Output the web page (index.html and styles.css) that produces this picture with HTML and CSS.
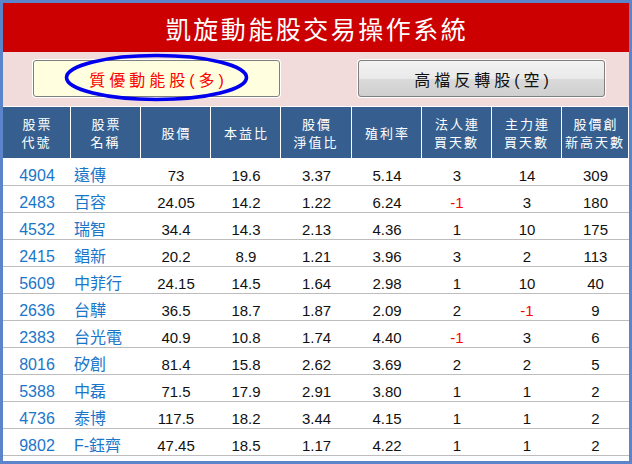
FILE: index.html
```html
<!DOCTYPE html>
<html lang="zh-Hant">
<head>
<meta charset="utf-8">
<title>凱旋動能股交易操作系統</title>
<link rel="stylesheet" href="styles.css">
</head>
<body>
<div class="frame">
  <header class="title">凱旋動能股交易操作系統</header>
  <div class="toolbar">
    <div class="btn btn-long">質優動能股(多)</div>
    <div class="btn btn-short">高檔反轉股(空)</div>
    <svg class="ring" width="186" height="50" viewBox="0 0 186 50"><ellipse cx="92.5" cy="24.5" rx="90" ry="22" fill="none" stroke="#0000ee" stroke-width="3.6"/></svg>
  </div>
  <table class="grid">
    <colgroup>
      <col class="c1"><col class="c2"><col class="c3"><col class="c4"><col class="c5"><col class="c6"><col class="c7"><col class="c8"><col class="c9">
    </colgroup>
    <thead>
      <tr>
        <th>股票<br>代號</th>
        <th>股票<br>名稱</th>
        <th>股價</th>
        <th>本益比</th>
        <th>股價<br>淨值比</th>
        <th>殖利率</th>
        <th>法人連<br>買天數</th>
        <th>主力連<br>買天數</th>
        <th class="last">股價創<br>新高天數</th>
      </tr>
    </thead>
    <tbody>
      <tr><td class="code">4904</td><td class="name">遠傳</td><td>73</td><td>19.6</td><td>3.37</td><td>5.14</td><td>3</td><td>14</td><td>309</td></tr>
      <tr><td class="code">2483</td><td class="name">百容</td><td>24.05</td><td>14.2</td><td>1.22</td><td>6.24</td><td class="neg">-1</td><td>3</td><td>180</td></tr>
      <tr><td class="code">4532</td><td class="name">瑞智</td><td>34.4</td><td>14.3</td><td>2.13</td><td>4.36</td><td>1</td><td>10</td><td>175</td></tr>
      <tr><td class="code">2415</td><td class="name">錩新</td><td>20.2</td><td>8.9</td><td>1.21</td><td>3.96</td><td>3</td><td>2</td><td>113</td></tr>
      <tr><td class="code">5609</td><td class="name">中菲行</td><td>24.15</td><td>14.5</td><td>1.64</td><td>2.98</td><td>1</td><td>10</td><td>40</td></tr>
      <tr><td class="code">2636</td><td class="name">台驊</td><td>36.5</td><td>18.7</td><td>1.87</td><td>2.09</td><td>2</td><td class="neg">-1</td><td>9</td></tr>
      <tr><td class="code">2383</td><td class="name">台光電</td><td>40.9</td><td>10.8</td><td>1.74</td><td>4.40</td><td class="neg">-1</td><td>3</td><td>6</td></tr>
      <tr><td class="code">8016</td><td class="name">矽創</td><td>81.4</td><td>15.8</td><td>2.62</td><td>3.69</td><td>2</td><td>2</td><td>5</td></tr>
      <tr><td class="code">5388</td><td class="name">中磊</td><td>71.5</td><td>17.9</td><td>2.91</td><td>3.80</td><td>1</td><td>1</td><td>2</td></tr>
      <tr><td class="code">4736</td><td class="name">泰博</td><td>117.5</td><td>18.2</td><td>3.44</td><td>4.15</td><td>1</td><td>1</td><td>2</td></tr>
      <tr><td class="code">9802</td><td class="name">F-鈺齊</td><td>47.45</td><td>18.5</td><td>1.17</td><td>4.22</td><td>1</td><td>1</td><td>2</td></tr>
    </tbody>
  </table>
</div>
</body>
</html>
```

FILE: styles.css
```css
html, body {
  margin: 0;
  padding: 0;
  background: #ffffff;
}

.frame {
  width: 632px;
  height: 464px;
  box-sizing: border-box;
  border: 3px solid #5b84cb;
  background: #ffffff;
  font-family: "Liberation Sans", "Noto Sans CJK TC", sans-serif;
  overflow: hidden;
}

.title {
  height: 49px;
  background: #cc0000;
  color: #ffffff;
  font-family: "Noto Sans CJK TC", sans-serif;
  font-size: 25px;
  letter-spacing: 2.5px;
  display: flex;
  align-items: center;
  justify-content: center;
  padding-left: 2px;
}

.toolbar {
  position: relative;
  height: 54px;
  background: #f2dcdb;
  display: flex;
  align-items: flex-start;
  padding: 8px 0 0 30px;
  box-sizing: border-box;
  gap: 78px;
  margin-bottom: 1px;
}

.btn {
  width: 247px;
  height: 37px;
  box-sizing: border-box;
  border: 1px solid #7f7f7f;
  border-radius: 3px;
  box-shadow: 0 0 0 1px #ffffff;
  display: flex;
  align-items: center;
  justify-content: center;
  font-family: "Liberation Sans", "Noto Sans CJK TC", sans-serif;
  font-size: 16px;
  letter-spacing: 4px;
  padding-left: 4px;
}

.btn-long {
  background: #ffffdf;
  color: #ff0000;
}

.btn-short {
  background: linear-gradient(#f3f3f3 0%, #e9e9e9 50%, #dadada 52%, #cfcfcf 100%);
  color: #111111;
}

.ring {
  position: absolute;
  left: 61px;
  top: 1px;
}

.grid {
  width: 626px;
  table-layout: fixed;
  border-collapse: separate;
  border-spacing: 0;
}

.c1 { width: 68px; }
.c2 { width: 70px; }
.c3 { width: 70px; }
.c4 { width: 70px; }
.c5 { width: 71px; }
.c6 { width: 70px; }
.c7 { width: 70px; }
.c8 { width: 70px; }
.c9 { width: 67px; }

.grid th {
  height: 51px;
  padding: 0;
  background: #365f90;
  color: #ffffff;
  font-family: "Noto Sans CJK TC", sans-serif;
  font-weight: normal;
  font-size: 13px;
  letter-spacing: 2px;
  line-height: 18px;
  text-indent: 2px;
  border-right: 1px solid #ffffff;
  vertical-align: middle;
}

.grid th.last {
  border-right: 1px solid #ffffff;
}

.grid td {
  height: 26px;
  padding: 0;
  border-bottom: 1px solid #bdbdbd;
  text-align: center;
  vertical-align: bottom;
  font-size: 15px;
  line-height: 18px;
  color: #111111;
}

.grid tbody tr:first-child td {
  height: 27px;
}

.grid td.code {
  color: #1a76c9;
  font-size: 16px;
}

.grid td.name {
  color: #1a76c9;
  font-size: 16px;
  text-align: left;
  padding-left: 3px;
}

.grid td.neg {
  color: #ff0000;
}
```
